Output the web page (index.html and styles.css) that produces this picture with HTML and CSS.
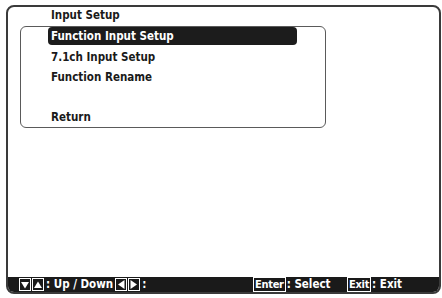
FILE: index.html
```html
<!DOCTYPE html>
<html lang="en">
<head>
	<meta charset="UTF-8">
	<title>Input Setup</title>
	<link rel="stylesheet" href="styles.css">
</head>
<body>
	<div class="screen">
		<div class="title">Input Setup</div>
		<div class="menu">
			<div class="row active"><span class="bar">Function Input Setup</span></div>
			<div class="row">7.1ch Input Setup</div>
			<div class="row">Function Rename</div>
			<div class="row"></div>
			<div class="row">Return</div>
		</div>
		<div class="footer">
			<span class="group nav">
				<span class="key"><svg width="8" height="8" viewBox="0 0 8 8"><path d="M0 1h8L4 7.5z" fill="#fff"/></svg></span><span class="key"><svg width="8" height="8" viewBox="0 0 8 8"><path d="M0 7h8L4 0.5z" fill="#fff"/></svg></span>
				<span class="label updown">: Up / Down</span>
				<span class="key"><svg width="8" height="9" viewBox="0 0 8 9"><path d="M7.5 0v9L1 4.5z" fill="#fff"/></svg></span><span class="key"><svg width="8" height="9" viewBox="0 0 8 9"><path d="M0.5 0v9L7 4.5z" fill="#fff"/></svg></span>
				<span class="label">:</span>
			</span>
			<span class="group enter">
				<span class="btn">Enter</span><span class="label">: Select</span>
			</span>
			<span class="group exit">
				<span class="btn">Exit</span><span class="label">: Exit</span>
			</span>
		</div>
	</div>
</body>
</html>
```

FILE: styles.css
```css
body{
	margin: 0;
	background: #fff;
	font-family: "DejaVu Sans Condensed", "Liberation Sans", sans-serif;
	font-weight: bold;
	font-size: 11.5px;
	color: #1a1a1a;
}
.screen{
	width: 435px;
	height: 289px;
	margin: 5px 0 0 6px;
	box-sizing: border-box;
	border: 2px solid #3a3a3a;
	border-radius: 8px;
	display: flex;
	flex-direction: column;
	overflow: hidden;
}
.title{
	line-height: 16px;
	padding-left: 43px;
}
.menu{
	margin: 3px 0 0 12px;
	width: 306px;
	box-sizing: border-box;
	border: 1px solid #5a5a5a;
	border-radius: 6px;
}
.row{
	height: 20px;
	line-height: 20px;
	padding-left: 30px;
}
.row.active{
	padding-left: 27px;
}
.bar{
	display: block;
	width: 249px;
	height: 18px;
	line-height: 18px;
	padding-left: 3px;
	box-sizing: border-box;
	background: #1c1c1c;
	color: #fff;
	border-radius: 4px;
}
.footer{
	margin-top: auto;
	height: 15px;
	background: #1a1a1a;
	color: #fff;
	display: flex;
	align-items: center;
	padding-left: 11px;
	line-height: 15px;
}
.group{
	display: flex;
	align-items: center;
}
.nav{
	width: 234px;
}
.enter{
	width: 94px;
}
.key{
	width: 10px;
	height: 11px;
	border: 1px solid #fff;
	display: flex;
	align-items: center;
	justify-content: center;
	margin-right: 1px;
}
.label{
	white-space: pre;
	margin-left: 1px;
}
.updown{
	margin-right: 2px;
}
.btn{
	border: 1px solid #fff;
	height: 13px;
	line-height: 13px;
	font-size: 11px;
	letter-spacing: -0.3px;
	padding: 0 1px;
}
```
